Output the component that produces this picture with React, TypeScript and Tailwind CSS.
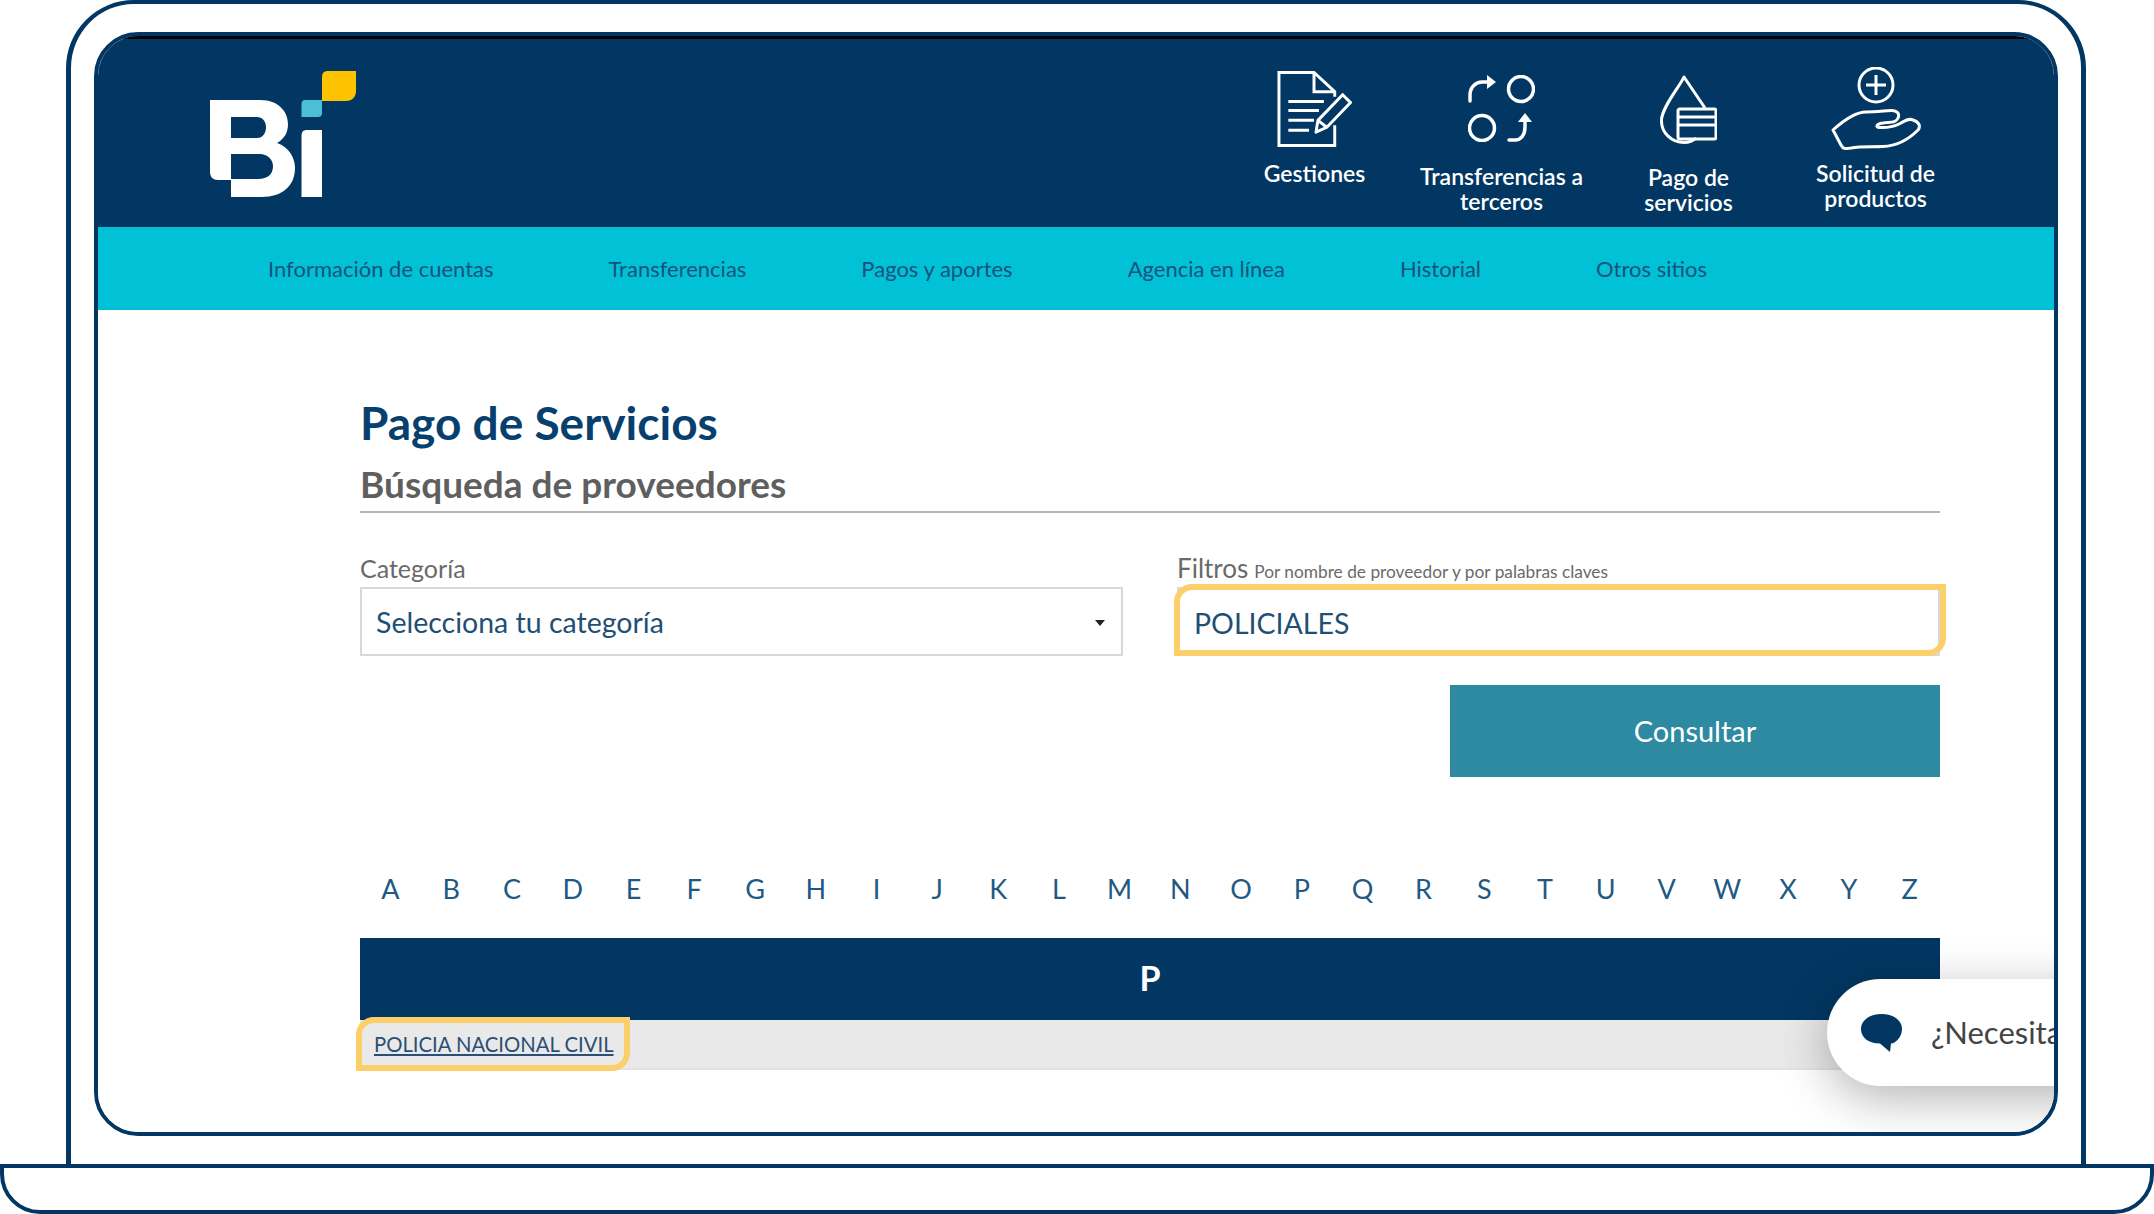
import React from 'react';

const LETTERS = 'ABCDEFGHIJKLMNOPQRSTUVWXYZ'.split('');
const NAV = ['Información de cuentas', 'Transferencias', 'Pagos y aportes', 'Agencia en línea', 'Historial', 'Otros sitios'];

const Logo = () => (
  <svg width="146" height="126" viewBox="0 0 146 126">
    <path d="M118 0H146V20C146 26 142 30 136 30H112V6C112 2 114 0 118 0Z" fill="#fdc300" />
    <path d="M95 29H112V42C112 45 110 46 108 46H91.500V33C91.500 30 93 29 95 29Z" fill="#4bbfd6" />
    <path
      fillRule="evenodd"
      fill="#fff"
      d="M0 29H50C70 29 78 42 78 53C78 62 74 68 67 72C79 76 85 87 85 97C85 115 72 126 52 126H21V109H8C3 109 0 106 0 101ZM21 46V67H47C53 67 56 62 56 56C56 50 52 46 47 46ZM21 83V108H48C58 108 63 103 63 95C63 88 57 83 50 83Z"
    />
    <path d="M97 59H112V126H91.500V65C91.500 61 93 59 97 59Z" fill="#fff" />
  </svg>
);

const GestionesIcon = () => (
  <svg width="75" height="76" viewBox="0 0 75 77" fill="none" stroke="#fff" strokeWidth="3">
    <path d="M58 26V21L37 1.500H1.500V75.500H58V55" />
    <path d="M37 1.500V21H58" />
    <path d="M11 31H47M11 40H42M11 50H37M11 60H32" />
    <path d="M66 24L74 32L50 57L39 62L41 50Z" strokeLinejoin="round" />
    <path d="M41 50L50 57" />
  </svg>
);

const TransferIcon = () => (
  <svg width="67" height="67" viewBox="0 0 67 67" fill="none" stroke="#fff" strokeWidth="3.500">
    <circle cx="53" cy="14" r="12.500" />
    <circle cx="14" cy="53" r="12.500" />
    <path d="M2 26V20C2 12 8 7 14 7H21" strokeLinecap="round" />
    <path d="M19 0L28 7L19 14Z" fill="#fff" stroke="none" />
    <path d="M41 65H47C53 65 57 60 57 52V46" strokeLinecap="round" />
    <path d="M50 47L57 38L64 47Z" fill="#fff" stroke="none" />
  </svg>
);

const PagoIcon = () => (
  <svg width="57" height="69" viewBox="0 0 57 69" fill="none" stroke="#fff" strokeWidth="3">
    <path d="M45 33L24 2C20 11 2 32 1.500 45C1 58 12 67.500 24 67.500C30 67.500 33 66 36 63" strokeLinejoin="round" />
    <rect x="18" y="34" width="38" height="30" rx="2" />
    <path d="M18 42H56M18 50H56" />
  </svg>
);

const SolicitudIcon = () => (
  <svg width="90" height="83" viewBox="0 0 90 83" fill="none" stroke="#fff" strokeWidth="3" strokeLinejoin="round">
    <circle cx="45" cy="18" r="17" />
    <path d="M45 8V28M35 18H55" />
    <path d="M2 63C12 54 24 45 35 45C44 45 52 44 60 43.500C66 43 69 47 67 51C65 56 60 55 52 56C46 56.500 44 60 48 60.500C56 61 62 60 68 57C73 54 78 51 82 53C88 55 90 59 87 63C78 72 66 79 52 79.500C40 80 30 79 20 81C14 82 12 82 10 78Z" />
  </svg>
);

const ChatIcon = () => (
  <svg width="41" height="38" viewBox="0 0 41 38" className="shrink-0">
    <path d="M20.500 0C32 0 41 6 41 15C41 24 33 30 30 29.500L29 38L19 29.500C8 29.500 0 24 0 15C0 6 9 0 20.500 0Z" fill="#023763" />
  </svg>
);

const HeaderItem = ({ icon, lines, iconTop }: { icon: React.ReactNode; lines: string[]; iconTop: string }) => (
  <div className={`flex w-[187px] flex-col items-center ${iconTop}`}>
    {icon}
    <div className="text-center text-[23px] leading-[24.500px] font-semibold text-white">
      {lines.map((l) => (
        <div key={l}>{l}</div>
      ))}
    </div>
  </div>
);

export default function App() {
  return (
    <div className="flex h-[1214px] w-[2154px] flex-col overflow-hidden bg-white font-['Lato',sans-serif]">
      {/* Laptop lid */}
      <div className="mr-[68px] ml-[66px] h-[1164px] shrink-0 rounded-t-[68px] border-x-[5px] border-t-[4px] border-[#023763] px-[23px] pt-[28px]">
        {/* Screen */}
        <div className="relative flex h-[1104px] flex-col overflow-hidden rounded-[44px] border-4 border-[#023763]">
          <div className="flex h-[191px] shrink-0 items-start justify-between border-t-[3px] border-black bg-[#023763] pr-[85px] pl-[112px]">
            <div className="pt-[32px]">
              <Logo />
            </div>
            <div className="flex">
              <HeaderItem icon={<GestionesIcon />} lines={['Gestiones']} iconTop="pt-[32px] gap-[14px]" />
              <HeaderItem icon={<TransferIcon />} lines={['Transferencias a', 'terceros']} iconTop="pt-[36px] gap-[22px]" />
              <HeaderItem icon={<PagoIcon />} lines={['Pago de', 'servicios']} iconTop="pt-[36px] gap-[21px]" />
              <HeaderItem icon={<SolicitudIcon />} lines={['Solicitud de', 'productos']} iconTop="pt-[28px] gap-[11px]" />
            </div>
          </div>

          <nav className="flex h-[83px] shrink-0 items-center gap-[115px] bg-[#00c1d5] pl-[170px] text-[22px] text-[#17537c]">
            {NAV.map((n) => (
              <span key={n}>{n}</span>
            ))}
          </nav>

          <main className="flex-1 bg-white pr-[114px] pl-[262px]">
            <h1 className="pt-[85px] text-[46px] leading-[56px] font-bold text-[#073f6e]">Pago de Servicios</h1>
            <h2 className="mt-[11px] border-b-2 border-[#b5b5b5] pb-[5px] text-[37px] leading-[44px] font-bold text-[#5f5f5f]">
              Búsqueda de proveedores
            </h2>

            <div className="mt-[41px] grid grid-cols-2 gap-x-[54px]">
              <div>
                <label className="block pb-[4px] text-[25px] leading-[29px] text-[#6a6a6a]">Categoría</label>
                <div className="flex h-[69px] items-center justify-between border-2 border-[#d8d8d8] pt-[2px] pr-[16px] pl-[14px] text-[28.500px] text-[#1f4f75]">
                  <span>Selecciona tu categoría</span>
                  <span className="h-0 w-0 border-x-[5px] border-t-[6px] border-x-transparent border-t-[#222]" />
                </div>
              </div>
              <div>
                <div className="flex h-[33px] items-baseline gap-[6px] text-[#6a6a6a]">
                  <span className="text-[26px] leading-[29px]">Filtros</span>
                  <span className="text-[17.300px] leading-[29px]">Por nombre de proveedor y por palabras claves</span>
                </div>
                <div className="relative">
                  <input
                    readOnly
                    value="POLICIALES"
                    className="block h-[69px] w-full border-2 border-[#d8d8d8] pt-[2px] pl-[15px] text-[28.500px] text-[#1f4f75] outline-none"
                  />
                  <span className="absolute -top-[3px] -right-[6px] -left-[3px] h-[72px] rounded-tl-[18px] rounded-br-[18px] border-[6px] border-[#fdcf6b]" />
                </div>
              </div>
            </div>

            <div className="mt-[29px] flex justify-end">
              <button className="h-[92px] w-[490px] bg-[#2d8aa0] text-[29px] text-white">Consultar</button>
            </div>

            <div className="mt-[92px] grid grid-cols-[repeat(26,minmax(0,1fr))] text-center text-[27px] leading-[40px] text-[#1f5a85]">
              {LETTERS.map((l) => (
                <span key={l}>{l}</span>
              ))}
            </div>

            <div className="mt-[29px] flex h-[82px] items-center justify-center bg-[#023763] pb-[4px] text-[34px] font-bold text-white">P</div>
            <div className="flex h-[50px] items-center border-b-2 border-[#e2e2e2] bg-[#e9e9e9]">
              <span className="relative pl-[14px] text-[20.300px] text-[#2a4f75] underline">
                POLICIA NACIONAL CIVIL
                <span className="absolute -top-[12px] -right-[16px] -bottom-[12px] -left-[4px] rounded-tl-[18px] rounded-br-[18px] border-[6px] border-[#fdcf6b]" />
              </span>
            </div>
          </main>

          {/* Chat launcher */}
          <div className="absolute top-[943px] -right-[120px] flex h-[107px] w-[347px] items-center gap-[29px] rounded-l-[54px] bg-white pl-[34px] text-[31px] whitespace-nowrap text-[#444] shadow-[0_12px_50px_rgba(0,0,0,0.3)]">
            <ChatIcon />
            <span>¿Necesitas ayuda?</span>
          </div>
        </div>
      </div>

      {/* Laptop base */}
      <div className="h-[50px] shrink-0 rounded-b-[40px] border-4 border-[#023763]" />
    </div>
  );
}
